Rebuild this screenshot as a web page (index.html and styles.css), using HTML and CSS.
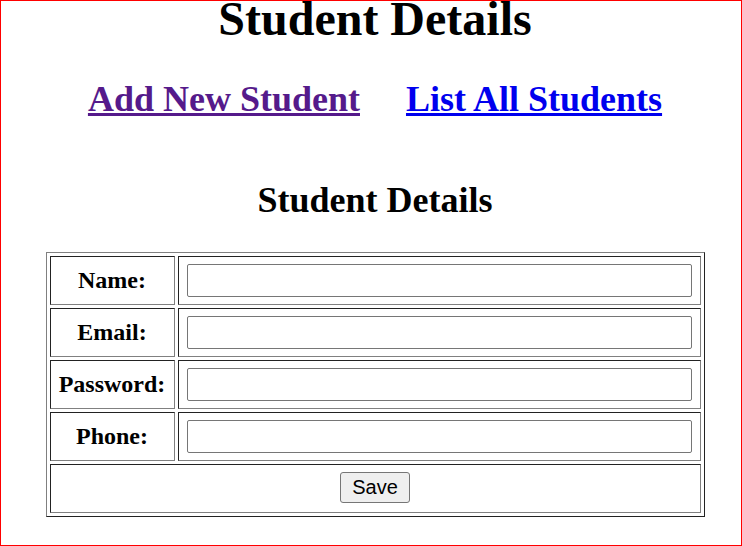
FILE: index.html
```html
<!DOCTYPE html>
<html>
<head>
<meta charset="utf-8">
<title>Student Details</title>
<link rel="stylesheet" href="styles.css">
</head>
<body>
<div class="page">
  <h1 class="title">Student Details</h1>
  <nav class="nav">
    <a class="nav-link visited" href="#add">Add New Student</a>
    <a class="nav-link" href="#list">List All Students</a>
  </nav>
  <h2 class="subtitle">Student Details</h2>
  <form class="form">
    <table class="grid">
      <tr>
        <th class="label">Name:</th>
        <td class="field"><input class="text-input" type="text"></td>
      </tr>
      <tr>
        <th class="label">Email:</th>
        <td class="field"><input class="text-input" type="text"></td>
      </tr>
      <tr>
        <th class="label">Password:</th>
        <td class="field"><input class="text-input" type="password"></td>
      </tr>
      <tr>
        <th class="label">Phone:</th>
        <td class="field"><input class="text-input" type="text"></td>
      </tr>
      <tr>
        <td class="actions" colspan="2"><button class="save-btn" type="button">Save</button></td>
      </tr>
    </table>
  </form>
</div>
</body>
</html>
```

FILE: styles.css
```css
html, body {
  margin: 0;
  padding: 0;
  background: #fff;
}

.page {
  box-sizing: border-box;
  width: 742px;
  height: 546px;
  border: 1px solid #ff0000;
  padding-left: 8px;
  font-family: "Liberation Serif", "Times New Roman", serif;
  color: #000;
  overflow: hidden;
}

.title {
  margin: 0;
  font-size: 48px;
  line-height: 36px;
  font-weight: bold;
  text-align: center;
}

.nav {
  margin-top: 42px;
  display: flex;
  justify-content: center;
  gap: 46px;
  font-size: 36px;
  line-height: 40px;
  font-weight: bold;
}

.nav-link {
  color: #0000ee;
  text-decoration: underline;
}

.nav-link.visited {
  color: #551a8b;
}

.subtitle {
  margin: 61px 0 0;
  font-size: 36px;
  line-height: 40px;
  font-weight: bold;
  text-align: center;
}

.form {
  margin: 32px 0 0;
}

.grid {
  margin: 0 auto;
  border-collapse: separate;
  border-spacing: 3px;
  border: 1px solid;
  border-color: #808080 #222 #222 #808080;
}

.grid th,
.grid td {
  border: 1px solid;
  border-color: #222 #808080 #808080 #222;
  height: 49px;
  padding: 0;
  vertical-align: middle;
  box-sizing: border-box;
}

.label {
  width: 125px;
  font-size: 24px;
  font-weight: bold;
  text-align: center;
  padding-bottom: 1px !important;
}

.field {
  width: 523px;
  padding: 0 8px 0 8px !important;
}

.text-input {
  display: block;
  box-sizing: border-box;
  width: 505px;
  height: 33px;
  margin: 0;
  border: 1px solid #767676;
  border-radius: 2px;
  background: #fff;
  font-family: "Liberation Sans", Arial, sans-serif;
  font-size: 16px;
}

.actions {
  text-align: center;
}

.save-btn {
  box-sizing: border-box;
  height: 31px;
  padding: 0 11px;
  margin: 0 0 2px;
  border: 1px solid #767676;
  border-radius: 3px;
  background: #efefef;
  color: #000;
  font-family: "Liberation Sans", Arial, sans-serif;
  font-size: 20px;
  line-height: 29px;
  vertical-align: middle;
}
```
